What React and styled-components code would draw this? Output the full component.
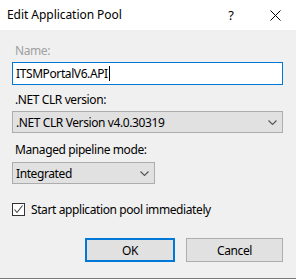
import React from "react";
import styled, { createGlobalStyle } from "styled-components";

const Global = createGlobalStyle`
  html, body { margin: 0; padding: 0; background: #f0f0f0; }
  * { box-sizing: border-box; }
`;

const Window = styled.div`
  width: 296px;
  height: 279px;
  background: #f0f0f0;
  font-family: "Segoe UI", "Noto Sans", "Open Sans", sans-serif;
  font-size: 12px;
  color: #000;
  display: flex;
  flex-direction: column;
  border-bottom: 1px solid #7a7a7a;
  overflow: hidden;
`;

const TitleBar = styled.div`
  height: 30px;
  background: #fff;
  display: flex;
  align-items: center;
  padding-left: 7px;
  flex: none;
`;

const Title = styled.div`
  flex: 1;
  font-size: 12px;
  line-height: 16px;
  margin-top: -1px;
  letter-spacing: -0.05px;
`;

const TitleButton = styled.div`
  width: ${(p) => p.$w}px;
  height: 30px;
  display: flex;
  align-items: center;
  justify-content: center;
  font-size: 13px;
`;

const Body = styled.div`
  flex: 1;
  display: flex;
  flex-direction: column;
  padding: 13px 13px 0 12px;
  letter-spacing: -0.4px;
`;

const Label = styled.div`
  line-height: 16px;
  height: 16px;
  padding-left: 3px;
  margin-top: ${(p) => p.$mt || 0}px;
  color: ${(p) => (p.$disabled ? "#a0a0a0" : "#000")};
`;

const TextBox = styled.div`
  margin-top: 3px;
  height: 23px;
  border: 1px solid #0078d7;
  background: #fff;
  display: flex;
  align-items: center;
  padding-left: 3px;
`;

const Caret = styled.span`
  display: inline-block;
  width: 1px;
  height: 15px;
  background: #000;
  margin-left: 1px;
`;

const Select = styled.div`
  margin-top: ${(p) => p.$mt || 0}px;
  width: ${(p) => p.$w};
  height: 22px;
  border: 1px solid #adadad;
  background: #e1e1e1;
  display: flex;
  align-items: center;
  padding: 0 5px 0 3px;
`;

const SelectText = styled.span`
  flex: 1;
  white-space: nowrap;
`;

const CheckRow = styled.div`
  margin-top: 17px;
  height: 16px;
  display: flex;
  align-items: center;
  gap: 6px;
`;

const CheckBox = styled.div`
  width: 13px;
  height: 13px;
  border: 1px solid #333;
  background: #fff;
  display: flex;
  align-items: center;
  justify-content: center;
`;

const ButtonRow = styled.div`
  margin-top: 21px;
  display: flex;
  justify-content: flex-end;
  gap: 11px;
`;

const Button = styled.div`
  width: ${(p) => p.$w}px;
  height: 24px;
  border: ${(p) => (p.$default ? "2px solid #0078d7" : "1px solid #adadad")};
  background: #e1e1e1;
  display: flex;
  align-items: center;
  justify-content: center;
`;

const Chevron = () => (
  <svg width="9" height="5" viewBox="0 0 9 5">
    <path d="M0.5 0.5 L4.5 4.5 L8.5 0.5" fill="none" stroke="#555" strokeWidth="1.1" />
  </svg>
);

export default function App() {
  return (
    <>
      <Global />
      <Window>
        <TitleBar>
          <Title>Edit Application Pool</Title>
          <TitleButton $w={46}>?</TitleButton>
          <TitleButton $w={42}>
            <svg width="11" height="11" viewBox="0 0 11 11">
              <path d="M0.5 0.5 L10.5 10.5 M10.5 0.5 L0.5 10.5" stroke="#000" strokeWidth="1" />
            </svg>
          </TitleButton>
        </TitleBar>
        <Body>
          <Label $disabled>Name:</Label>
          <TextBox>
            ITSMPortalV6.API<Caret />
          </TextBox>
          <Label $mt={7}>.NET CLR version:</Label>
          <Select $mt={3} $w="100%">
            <SelectText>.NET CLR Version v4.0.30319</SelectText>
            <Chevron />
          </Select>
          <Label $mt={9}>Managed pipeline mode:</Label>
          <Select $mt={4} $w="143px">
            <SelectText>Integrated</SelectText>
            <Chevron />
          </Select>
          <CheckRow>
            <CheckBox>
              <svg width="11" height="11" viewBox="0 0 11 11">
                <path d="M1.5 5.5 L4 8.5 L9.5 1.5" fill="none" stroke="#444" strokeWidth="1.1" />
              </svg>
            </CheckBox>
            <span>Start application pool immediately</span>
          </CheckRow>
          <ButtonRow>
            <Button $w={90} $default>OK</Button>
            <Button $w={97}>Cancel</Button>
          </ButtonRow>
        </Body>
      </Window>
    </>
  );
}
